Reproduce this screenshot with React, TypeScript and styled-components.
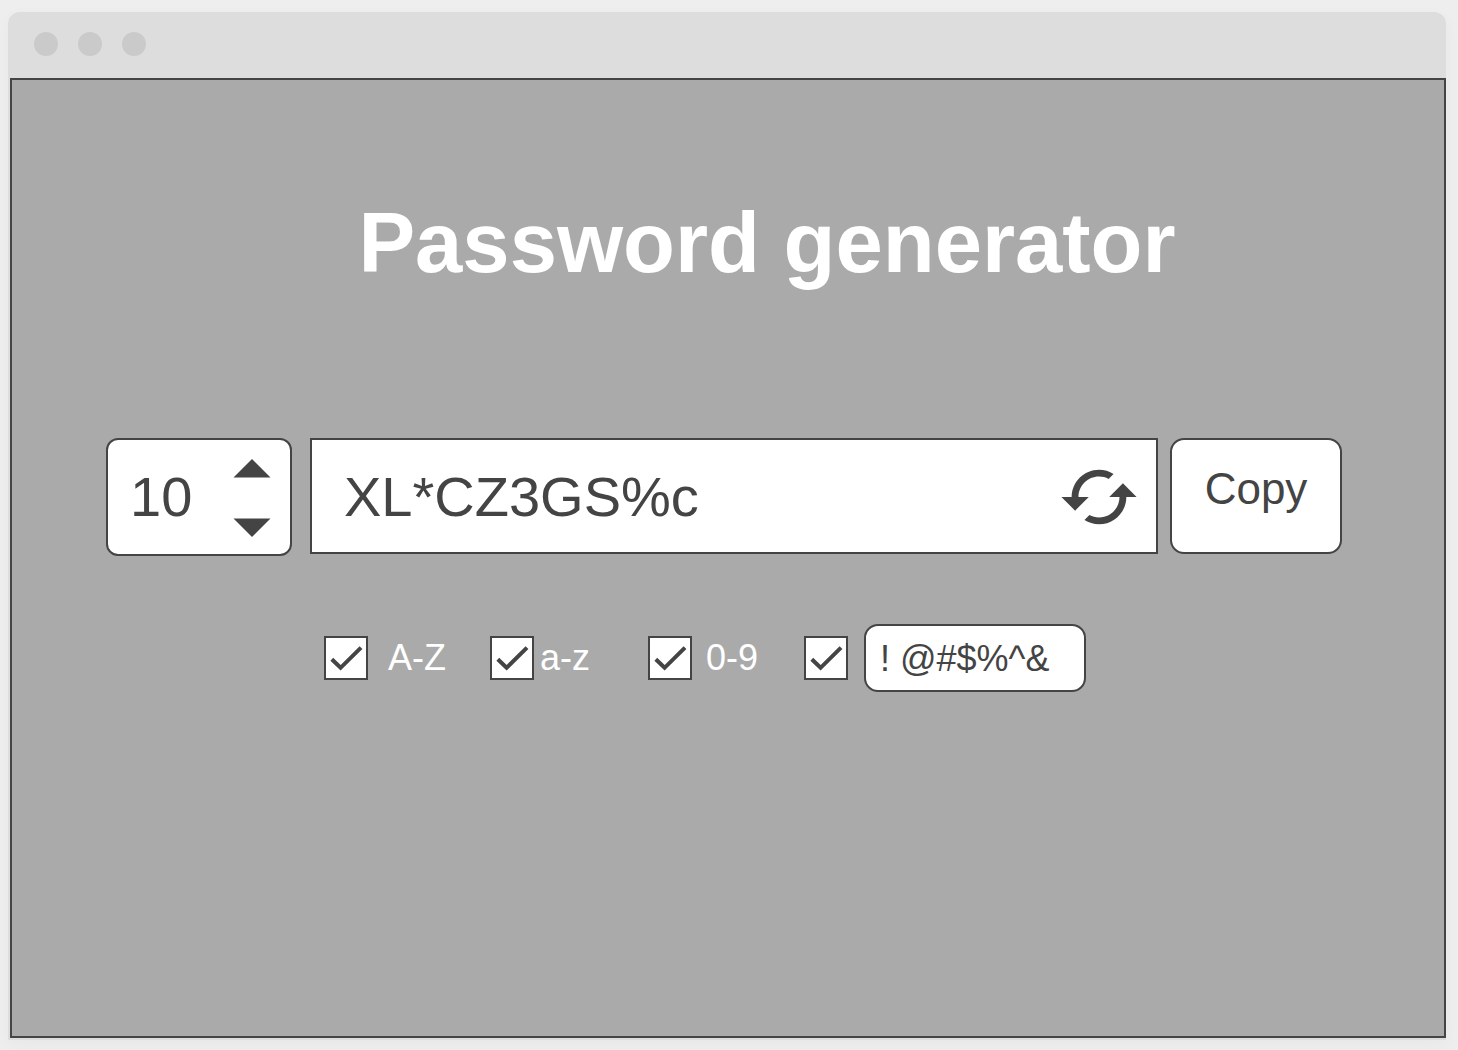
import React, { useState } from "react";
import styled, { createGlobalStyle } from "styled-components";

const ink = "#444444";

const GlobalStyle = createGlobalStyle`
  *, *::before, *::after {
    box-sizing: border-box;
  }
  body {
    margin: 0;
    background: #eeeeee;
    color: ${ink};
    font-family: "Liberation Sans", Arial, sans-serif;
  }
  button, input {
    font-family: inherit;
    color: inherit;
  }
`;

const Page = styled.div`
  display: flex;
  min-height: 100vh;
  padding: 12px 12px 10px 8px;
`;

const Window = styled.div`
  flex: 1;
  min-width: 0;
  display: flex;
  flex-direction: column;
  padding: 0 0 2px 2px;
  background: #dddddd;
  border-radius: 12px 12px 0 0;
  box-shadow: 0 4px 16px rgba(0, 0, 0, 0.03);
`;

const TitleBar = styled.header`
  display: flex;
  align-items: center;
  gap: 20px;
  height: 66px;
  padding: 0 24px 2px;
`;

const Dot = styled.span`
  width: 24px;
  height: 24px;
  border-radius: 50%;
  background: #cacaca;
`;

const Panel = styled.main`
  flex: 1;
  padding: 116px 102px 40px 94px;
  border: 2px solid ${ink};
  background: #aaaaaa;
`;

const Title = styled.h1`
  margin: 0 0 148px;
  padding-left: 86px;
  color: #ffffff;
  font-size: 85px;
  line-height: 94px;
  font-weight: 700;
  text-align: center;
`;

const Generator = styled.div`
  display: flex;
  align-items: flex-start;
  gap: 12px;
`;

const Stepper = styled.div`
  display: flex;
  align-items: center;
  justify-content: space-between;
  width: 186px;
  height: 118px;
  margin-right: 6px;
  padding: 0 19px 0 22px;
  border: 2px solid ${ink};
  border-radius: 12px;
  background: #ffffff;
`;

const ValueInput = styled.input`
  min-width: 0;
  padding: 0;
  border: 0;
  outline: 0;
  background: transparent;
  font-size: 56px;
  line-height: 64px;
`;

const LengthInput = styled(ValueInput)`
  width: 80px;
  appearance: textfield;
  &::-webkit-inner-spin-button,
  &::-webkit-outer-spin-button {
    appearance: none;
    margin: 0;
  }
`;

const Arrows = styled.div`
  display: flex;
  flex-direction: column;
  gap: 40px;
  padding-top: 2px;
`;

const IconButton = styled.button`
  display: flex;
  padding: 0;
  border: 0;
  background: transparent;
  cursor: pointer;
`;

const PasswordBox = styled.div`
  flex: 1;
  min-width: 0;
  display: flex;
  align-items: center;
  height: 116px;
  padding: 2px 16px 0 32px;
  border: 2px solid ${ink};
  background: #ffffff;
`;

const PasswordInput = styled(ValueInput)`
  flex: 1;
`;

const CopyButton = styled.button`
  width: 172px;
  height: 116px;
  padding: 0 0 14px;
  border: 2px solid ${ink};
  border-radius: 14px;
  background: #ffffff;
  font-size: 44px;
  line-height: 50px;
  cursor: pointer;
`;

const Options = styled.div`
  display: grid;
  grid-template-columns: 166px 158px 156px auto;
  justify-content: center;
  align-items: center;
  margin-top: 68px;
  padding-right: 38px;
`;

const Option = styled.label<{ $gap: number }>`
  display: flex;
  align-items: center;
  gap: ${(p) => p.$gap}px;
  color: #ffffff;
  font-size: 36px;
  line-height: 42px;
`;

const Tick = styled.span`
  display: grid;
  width: 44px;
  height: 44px;
  > * {
    grid-area: 1 / 1;
  }
  svg {
    pointer-events: none;
    visibility: hidden;
  }
  input:checked + svg {
    visibility: visible;
  }
`;

const TickInput = styled.input`
  appearance: none;
  width: 44px;
  height: 44px;
  margin: 0;
  border: 2px solid ${ink};
  background: #ffffff;
  cursor: pointer;
`;

const SymbolsInput = styled.input`
  width: 222px;
  height: 68px;
  padding: 2px 14px 0;
  border: 2px solid ${ink};
  border-radius: 14px;
  background: #ffffff;
  color: ${ink};
  font-size: 36px;
  line-height: 42px;
`;

const OptionGroup = styled.div`
  display: flex;
  align-items: center;
  gap: 16px;
`;

type CheckboxProps = {
  checked: boolean;
  onToggle: () => void;
  label?: string;
};

function Checkbox({ checked, onToggle, label }: CheckboxProps) {
  return (
    <Tick>
      <TickInput type="checkbox" checked={checked} onChange={onToggle} aria-label={label} />
      <svg width="44" height="44" viewBox="0 0 44 44" fill="none" aria-hidden="true">
        <path d="M7.8 23.2 16.6 31.8 37 11.6" stroke={ink} strokeWidth="4" />
      </svg>
    </Tick>
  );
}

const ranges = [
  { id: "upper", text: "A-Z", gap: 20, chars: "ABCDEFGHIJKLMNOPQRSTUVWXYZ" },
  { id: "lower", text: "a-z", gap: 6, chars: "abcdefghijklmnopqrstuvwxyz" },
  { id: "digits", text: "0-9", gap: 14, chars: "0123456789" },
];

export default function App() {
  const [length, setLength] = useState(10);
  const [password, setPassword] = useState("XL*CZ3GS%c");
  const [symbols, setSymbols] = useState("! @#$%^&");
  const [enabled, setEnabled] = useState<Record<string, boolean>>({
    upper: true,
    lower: true,
    digits: true,
    symbols: true,
  });

  const toggle = (id: string) => setEnabled((prev) => ({ ...prev, [id]: !prev[id] }));

  const generate = () => {
    let pool = ranges.filter((r) => enabled[r.id]).map((r) => r.chars).join("");
    if (enabled.symbols) pool += symbols.replace(/\s/g, "");
    if (!pool) return;
    setPassword(
      Array.from({ length }, () => pool[Math.floor(Math.random() * pool.length)]).join("")
    );
  };

  return (
    <>
      <GlobalStyle />
      <Page>
        <Window>
          <TitleBar>
            <Dot />
            <Dot />
            <Dot />
          </TitleBar>
          <Panel>
            <Title>Password generator</Title>
            <Generator>
              <Stepper>
                <LengthInput
                  type="number"
                  aria-label="Length"
                  min={1}
                  value={length}
                  onChange={(e) => setLength(Math.max(1, Number(e.target.value)))}
                />
                <Arrows>
                  <IconButton type="button" aria-label="Increase" onClick={() => setLength(length + 1)}>
                    <svg width="38" height="19" viewBox="0 0 38 19" aria-hidden="true">
                      <path d="M19 0 37.5 18.5H.5Z" fill={ink} />
                    </svg>
                  </IconButton>
                  <IconButton
                    type="button"
                    aria-label="Decrease"
                    onClick={() => setLength(Math.max(1, length - 1))}
                  >
                    <svg width="38" height="19" viewBox="0 0 38 19" aria-hidden="true">
                      <path d="M.5 .5H37.5L19 19Z" fill={ink} />
                    </svg>
                  </IconButton>
                </Arrows>
              </Stepper>
              <PasswordBox>
                <PasswordInput
                  type="text"
                  aria-label="Password"
                  spellCheck={false}
                  value={password}
                  onChange={(e) => setPassword(e.target.value)}
                />
                <IconButton type="button" aria-label="Regenerate" onClick={generate}>
                  <svg width="82" height="82" viewBox="0 0 24 24" aria-hidden="true">
                    <path
                      d="M19 8l-4 4h3c0 3.31-2.69 6-6 6-1.01 0-1.97-.25-2.8-.7l-1.46 1.46C8.97 19.54 10.43 20 12 20c4.42 0 8-3.58 8-8h3l-4-4zM6 12c0-3.31 2.69-6 6-6 1.01 0 1.97.25 2.8.7l1.46-1.46C15.03 4.46 13.57 4 12 4c-4.42 0-8 3.58-8 8H1l4 4 4-4H6z"
                      fill={ink}
                    />
                  </svg>
                </IconButton>
              </PasswordBox>
              <CopyButton type="button" onClick={() => navigator.clipboard?.writeText(password)}>
                Copy
              </CopyButton>
            </Generator>
            <Options>
              {ranges.map((r) => (
                <Option key={r.id} $gap={r.gap}>
                  <Checkbox checked={enabled[r.id]} onToggle={() => toggle(r.id)} />
                  {r.text}
                </Option>
              ))}
              <OptionGroup>
                <Checkbox
                  checked={enabled.symbols}
                  onToggle={() => toggle("symbols")}
                  label="Use symbols"
                />
                <SymbolsInput
                  type="text"
                  aria-label="Symbols"
                  spellCheck={false}
                  value={symbols}
                  onChange={(e) => setSymbols(e.target.value)}
                />
              </OptionGroup>
            </Options>
          </Panel>
        </Window>
      </Page>
    </>
  );
}
